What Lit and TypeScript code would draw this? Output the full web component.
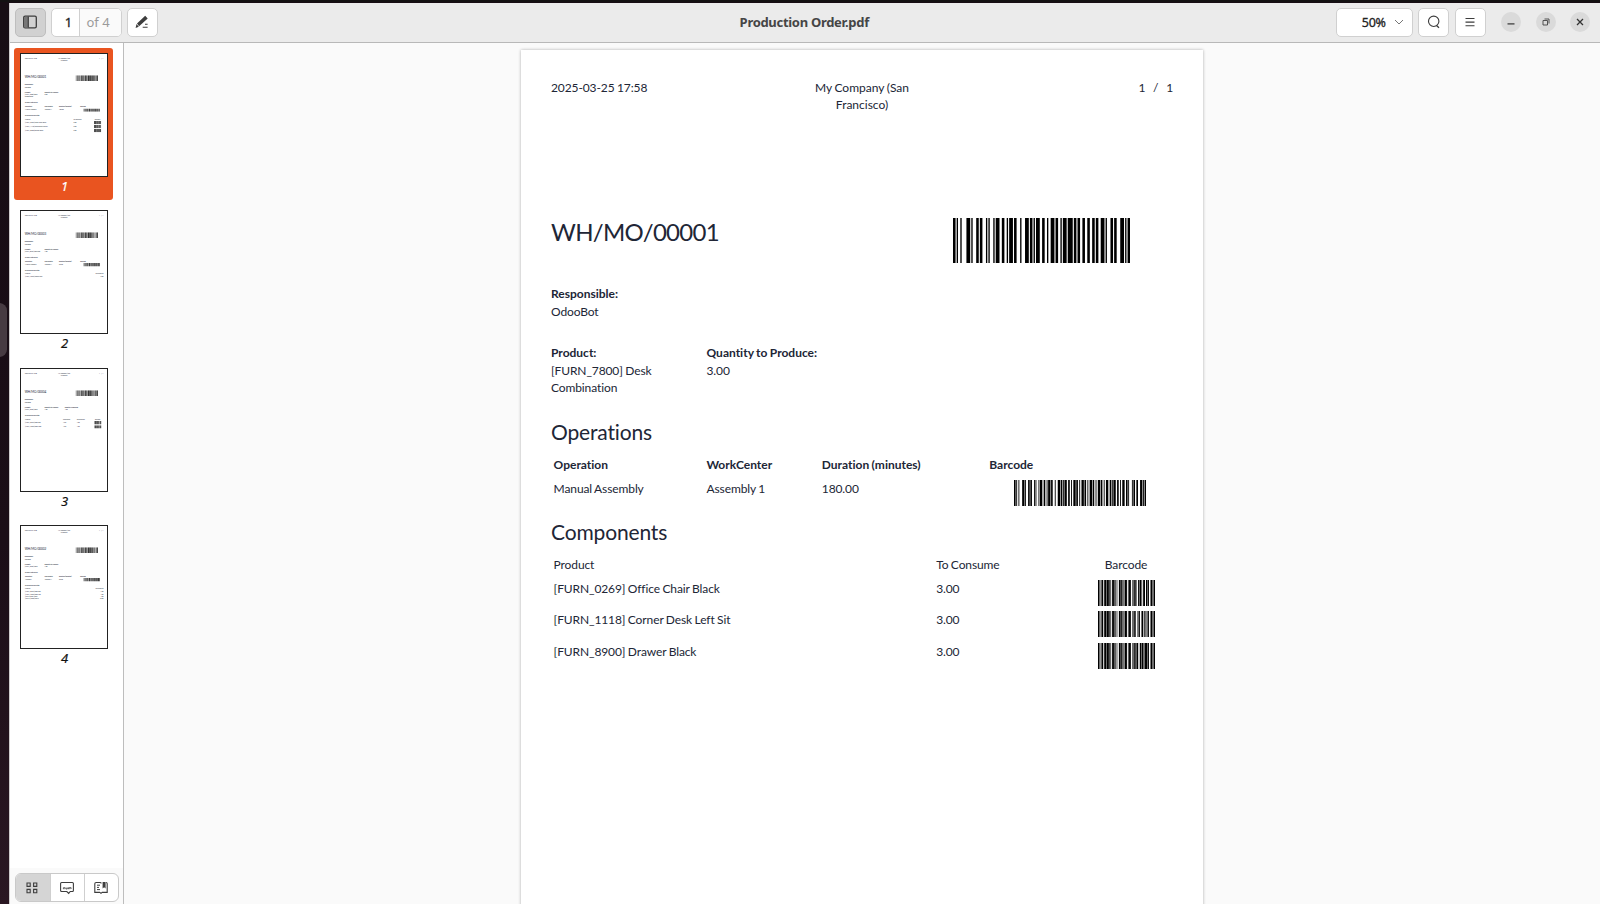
import { LitElement, html, svg, css, nothing } from "lit";
import { customElement, property } from "lit/decorators.js";

const PATTERNS = (
  "212222 222122 222221 121223 121322 131222 122213 122312 132212 221213 " +
  "221312 231212 112232 122132 122231 113222 123122 123221 223211 221132 " +
  "221231 213212 223112 312131 311222 321122 321221 312212 322112 322211 " +
  "212123 212321 232121 111323 131123 131321 112313 132113 132311 211313 " +
  "231113 231311 112133 112331 132131 113123 113321 133121 313121 211331 " +
  "231131 213113 213311 213131 311123 311321 331121 312113 312311 332111 " +
  "314111 221411 431111 111224 111422 121124 121421 141122 141221 112214 " +
  "112412 122114 122411 142112 142211 241211 221114 413111 241112 134111 " +
  "111242 121142 121241 114212 124112 124211 411212 421112 421211 212141 " +
  "214121 412121 111143 111341 131141 114113 114311 411113 411311 113141 " +
  "114131 311141 411131 211412 211214 211232 2331112"
).split(" ");

/** Code 128: set B for the text, set C for an even run of trailing digits. */
function code128(value: string): string {
  const tail = /\d*$/.exec(value)![0];
  const even = tail.length - (tail.length % 2);
  const packed = even >= 4 ? even : 0;
  const head = value.slice(0, value.length - packed);
  const codes: number[] = [head ? 104 : 105];
  for (const c of head) codes.push(c.charCodeAt(0) - 32);
  if (packed && head) codes.push(99);
  for (let i = head.length; i < value.length; i += 2) codes.push(Number(value.slice(i, i + 2)));
  const sum = codes.reduce((a, c, i) => a + c * Math.max(i, 1), 0);
  codes.push(sum % 103, 106);
  return codes.map((c) => PATTERNS[c]).join("");
}

@customElement("bar-code")
class BarCode extends LitElement {
  @property() value = "";
  /** Extra ink on each bar, in modules. */
  @property({ type: Number }) gain = 0;
  static styles = css`
    :host { display: block; }
    .bars { display: block; width: 100%; height: 100%; }
  `;
  render() {
    let x = 0;
    let d = "";
    [...code128(this.value)].forEach((w, i) => {
      const n = Number(w);
      const ink = n + this.gain;
      if (i % 2 === 0) d += `M${x} 0h${ink}v10h-${ink}z`;
      x += n;
    });
    return html`<svg class="bars" viewBox="0 0 ${x} 10" preserveAspectRatio="none">
      ${svg`<path d=${d} fill="#000"></path>`}
    </svg>`;
  }
}

interface Info { label: string; lines: string[]; }
interface Order {
  name: string;
  info: Info[];
  operation?: { cells: string[]; code: string };
  columns: string;
  heads: string[];
  rows: { cells: string[]; code?: string }[];
}

const COMPONENTS = "382.6px 166px 1fr";

const ORDERS: Order[] = [
  {
    name: "WH/MO/00001",
    info: [
      { label: "Product:", lines: ["[FURN_7800] Desk", "Combination"] },
      { label: "Quantity to Produce:", lines: ["3.00"] },
    ],
    operation: { cells: ["Manual Assembly", "Assembly 1", "180.00"], code: "WH/MO/00001/1" },
    columns: COMPONENTS,
    heads: ["Product", "To Consume", "Barcode"],
    rows: [
      { cells: ["[FURN_0269] Office Chair Black", "3.00"], code: "601647855632" },
      { cells: ["[FURN_1118] Corner Desk Left Sit", "3.00"], code: "601647855634" },
      { cells: ["[FURN_8900] Drawer Black", "3.00"], code: "601647855646" },
    ],
  },
  {
    name: "WH/MO/00003",
    info: [
      { label: "Product:", lines: ["[FURN_8522] Table Top"] },
      { label: "Quantity to Produce:", lines: ["1.00"] },
    ],
    operation: { cells: ["Manual Assembly", "Assembly 1", "60.00"], code: "WH/MO/00003/3" },
    columns: "1fr auto",
    heads: ["Product", "To Consume"],
    rows: [{ cells: ["[FURN_7023] Wood Panel", "2.00"] }],
  },
  {
    name: "WH/MO/00004",
    info: [
      { label: "Product:", lines: ["[FURN_9666] Table"] },
      { label: "Quantity to Produce:", lines: ["1.00"] },
      { label: "Quantity Producing:", lines: ["1.00"] },
    ],
    columns: "300px 108px 142px 1fr",
    heads: ["Product", "Consumed", "To Consume", "Barcode"],
    rows: [
      { cells: ["[FURN_8522] Table Top", "1.00", "1.00"], code: "601647855637" },
      { cells: ["[FURN_2333] Table Legs", "4.00", "4.00"], code: "601647855638" },
    ],
  },
  {
    name: "WH/MO/00002",
    info: [
      { label: "Product:", lines: ["[FURN_9666] Table"] },
      { label: "Quantity to Produce:", lines: ["1.00"] },
    ],
    operation: { cells: ["Assembly", "Assembly 1", "60.00"], code: "WH/MO/00002/2" },
    columns: "1fr auto",
    heads: ["Product", "To Consume"],
    rows: [
      { cells: ["[FURN_8522] Table Top", "1.00"] },
      { cells: ["[FURN_2333] Table Leg", "4.00"] },
      { cells: ["[CONS_8901] Bolt", "4.00"] },
      { cells: ["[CONS_2568] Screw", "10.00"] },
    ],
  },
];

@customElement("order-page")
class OrderPage extends LitElement {
  @property({ attribute: false }) order!: Order;
  static styles = css`
    :host {
      display: block; box-sizing: border-box; width: 682px; height: 965px; padding: 28px 30px 0;
      background: #fff; color: #212636; font: 12px/17.5px Lato, sans-serif; white-space: nowrap;
      letter-spacing: -0.11px; word-spacing: -0.5px; font-variant-ligatures: none;
    }
    .head { display: grid; grid-template-columns: 1fr 118px 1fr; height: 138px; line-height: 17px; padding-top: 1px; box-sizing: border-box; }
    .mid { text-align: center; letter-spacing: 0; }
    .num { text-align: right; word-spacing: 4.8px; }
    .title { display: flex; justify-content: space-between; height: 69.4px; }
    .h1 { font-size: 24px; line-height: 31.6px; letter-spacing: -0.7px; }
    .big { width: 177px; height: 45px; margin: 2px 43px 0 0; }
    .b { font-weight: 700; letter-spacing: 0; }
    .info { display: grid; grid-template-columns: 155.5px 160px 1fr; margin-top: 24px; }
    .h2 { font-size: 21px; line-height: 26px; margin-top: 22px; letter-spacing: -0.15px; }
    .h2.next { margin-top: 13px; }
    .table { padding-left: 2.6px; margin-top: 11px; }
    .row { display: grid; height: 31.4px; }
    .row.labels { height: 24px; }
    .row.plain { height: 18px; }
    .row.plain div + div { text-align: right; }
    .ops { grid-template-columns: 152.9px 115.3px 167.5px 1fr; }
    .ops.row { height: 26px; }
    .ops.labels { height: 24px; }
    .opcode { width: 132px; height: 26px; margin: -0.4px 0 0 25px; }
    .item { width: 57px; height: 26px; margin: 0.1px 0 0 -4px; }
    .off { padding-left: 2.6px; }
  `;
  render() {
    const o = this.order;
    return html`
      <div class="head">
        <div>2025-03-25 17:58</div>
        <div class="mid">My Company (San<br />Francisco)</div>
        <div class="num">1 / 1</div>
      </div>
      <div class="title">
        <div class="h1">${o.name}</div>
        <bar-code class="big" .value=${o.name} .gain=${0.1}></bar-code>
      </div>
      <div class="b">Responsible:</div>
      <div>OdooBot</div>
      <div class="info">
        ${o.info.map((i) => html`<div><div class="b">${i.label}</div>${i.lines.map((l) => html`<div>${l}</div>`)}</div>`)}
      </div>
      ${o.operation
        ? html`<div class="h2">Operations</div>
            <div class="table">
              <div class="row ops labels b">
                <div>Operation</div><div>WorkCenter</div><div>Duration (minutes)</div><div>Barcode</div>
              </div>
              <div class="row ops">
                ${o.operation.cells.map((c) => html`<div>${c}</div>`)}
                <bar-code class="opcode" .value=${o.operation.code} .gain=${0.2}></bar-code>
              </div>
            </div>`
        : nothing}
      <div class="h2 ${o.operation ? "next" : ""}">Components</div>
      <div class="table">
        <div class="row labels" style="grid-template-columns:${o.columns}">
          ${o.heads.map((h) => html`<div class=${h === "Barcode" ? "off" : ""}>${h}</div>`)}
        </div>
        ${o.rows.map((r) => html`<div class="row ${r.code ? "" : "plain"}" style="grid-template-columns:${o.columns}">
          ${r.cells.map((c) => html`<div>${c}</div>`)}
          ${r.code ? html`<bar-code class="item" .value=${r.code} .gain=${0.25}></bar-code>` : nothing}
        </div>`)}
      </div>`;
  }
}

const icon = (body: unknown) => html`<svg width="16" height="16" viewBox="0 0 16 16" fill="none" stroke="#3d3d3d">${body}</svg>`;
const ICONS = {
  panel: icon(svg`<rect x="1.7" y="2.2" width="12.6" height="11.6" rx="1.4" stroke-width="1.3"/><path d="M2 3h4v10.5H2z" fill="#777" stroke="none"/><path d="M6.3 2.5v11" stroke-width="1.2"/>`),
  pen: icon(svg`<path d="M1.6 13.9l.9-3.8 2.3 2.6zM3 9.4L11.2 1.8l2.5 2.6-8.6 7.8z" fill="#3d3d3d" stroke="none"/><path d="M11 10.2h2.6M8.7 13.2h4.9" stroke-width="1.1"/>`),
  search: icon(svg`<circle cx="7.7" cy="7.3" r="5.2" stroke-width="1.1"/><path d="M10.5 11.5l2.5 2.2" stroke-width="1.3"/>`),
  menu: icon(svg`<path d="M3.5 4.5h9M3.5 8.1h9M3.5 11.7h9" stroke-width="1.1"/>`),
  grid: icon(svg`<path d="M3 3h3.2v3.4H3zM9.6 3h3.2v3.4H9.6zM3 9.4h3.2v3.4H3zM9.6 9.4h3.2v3.4H9.6z" stroke-width="1.1"/>`),
  note: icon(svg`<path d="M2.6 2.5h10.8q1 0 1 1v7q0 1-1 1h-2.2l-1.5 2-1.9-2H2.6q-1 0-1-1v-7q0-1 1-1z" stroke-width="1.1"/><path d="M4.4 9.2V7.7h1.5v1.5M7 7.5V9h1.3V7.5M9.5 9.2V7.7h1.3v1.5M10.8 7.7h1.3v1.2" stroke-width=".8"/>`),
  book: icon(svg`<path d="M8.5 3.2l-1.2-.7H3.2q-1.4 0-1.4 1.3v8.6h5l1.2 1 1.2-1h5V3.8q0-1.3-1.2-1.3" stroke-width="1.1"/><path d="M9.6 1.9h3v6.6l-1.5-1.3-1.5 1.3z" fill="#3d3d3d" stroke="none"/><path d="M4 5.2h3M4 7.4h2M4 9.6h3" stroke-width="1"/>`),
};

@customElement("app-root")
class AppRoot extends LitElement {
  static styles = css`
    :host {
      display: flex; box-sizing: border-box; width: 1600px; height: 904px; overflow: hidden;
      padding: 3px 0 0 9px; position: relative; color: #3d3d3d;
      background: linear-gradient(#131112 0 2.4px, #fff0 2.4px), linear-gradient(#170d14, #1b0e17 60%, #2a1722);
      font: 14px "Noto Sans", "Open Sans", sans-serif;
    }
    svg { display: block; flex: none; }
    .handle { position: absolute; left: -8px; top: 303px; width: 15px; height: 54px; border-radius: 8px; background: #473b42; }
    .window { flex: 1; display: flex; flex-direction: column; background: #fafafa; border-left: 1px solid #cfcccd; min-width: 0; }
    .bar { display: grid; grid-template-columns: 1fr auto 1fr; align-items: center; height: 40px; box-sizing: border-box; background: #ebebeb; border-bottom: 1px solid #b8b8b8; padding: 0 10px 1px 4.5px; }
    .side { display: flex; align-items: center; }
    .right { justify-content: flex-end; }
    .title { font-weight: 700; font-size: 13px; letter-spacing: -0.3px; color: #454545; padding-left: 4px; }
    .btn { box-sizing: border-box; display: flex; align-items: center; justify-content: center; width: 31px; height: 29px; border: 1px solid #d0d0d0; border-radius: 5px; background: #fff; }
    .btn.on { background: #d1d1d1; border-color: #bebebe; }
    .pages { width: 71px; margin: 0 5px; justify-content: stretch; overflow: hidden; line-height: 27px; }
    .cur { width: 28px; box-sizing: border-box; padding-left: 7px; text-align: center; color: #222; font-size: 13px; border-right: 1px solid #d0d0d0; -webkit-text-stroke: .3px #222; }
    .of { flex: 1; padding-left: 7px; color: #9a9a9a; background: #fafafa; font-size: 13px; }
    .zoom { width: 77px; margin-right: 5.5px; padding-left: 17px; gap: 8px; font-size: 12.5px; color: #222; letter-spacing: -0.3px; -webkit-text-stroke: .3px #222; }
    .menu { margin: 0 15.5px 0 5.5px; }
    .dot { width: 20px; height: 20px; border-radius: 50%; background: #dadada; margin-left: 14.4px; display: flex; align-items: center; justify-content: center; }
    .dot.first { margin-left: 0; }
    .body { flex: 1; display: flex; min-height: 0; }
    .nav { width: 113px; display: flex; flex-direction: column; background: #fff; border-right: 1px solid #bdbdbd; }
    .thumbs { flex: 1; padding: 5px 0 0 4px; display: flex; flex-direction: column; min-height: 0; overflow: hidden; }
    .thumb { width: 99px; height: 152px; margin-bottom: 5.3px; border-radius: 3px; box-sizing: border-box; padding: 5px 6px 0; color: #111; font-size: 13px; line-height: 18px; flex: none; }
    .no { text-align: center; font-style: italic; padding-left: 2px; -webkit-text-stroke: .2px; }
    .thumb.sel { background: #e95420; color: #fff; }
    .frame { width: 88px; height: 124px; box-sizing: border-box; border: 1px solid #222; overflow: hidden; background: #fff; }
    .mini { transform: scale(.1265); transform-origin: 0 0; margin-left: -0.3px; }
    .foot { height: 36px; flex: none; background: #fafafa; padding: 5px 0 0 4.5px; box-sizing: border-box; }
    .tabs { width: 104px; height: 29px; box-sizing: border-box; display: grid; grid-template-columns: repeat(3, 1fr); border: 1px solid #c9c9c9; border-radius: 6px; background: #fff; overflow: hidden; }
    .tab { display: flex; align-items: center; justify-content: center; border-left: 1px solid #cfcfcf; padding-right: 1px; }
    .tab.on { background: #d5d5d5; border-left: 0; padding-right: 1.5px; }
    .view { flex: 1; overflow: hidden; padding: 7px 0 0 397px; }
    .sheet { box-shadow: 0 0 3px rgba(0, 0, 0, .3); }
  `;
  render() {
    return html`
      <div class="handle"></div>
      <div class="window">
        <div class="bar">
          <div class="side">
            <div class="btn on">${ICONS.panel}</div>
            <div class="btn pages"><span class="cur">1</span><span class="of">of 4</span></div>
            <div class="btn">${ICONS.pen}</div>
          </div>
          <div class="title">Production Order.pdf</div>
          <div class="side right">
            <div class="btn zoom">50%<svg width="10" height="6" viewBox="0 0 10 6" fill="none" stroke="#777"><path d="M1 1l4 4 4-4"/></svg></div>
            <div class="btn">${ICONS.search}</div>
            <div class="btn menu">${ICONS.menu}</div>
            <div class="dot first"><svg width="8" height="8" viewBox="0 0 8 8"><path d="M.5 5.9h7" stroke="#333" stroke-width="1.2"/></svg></div>
            <div class="dot"><svg width="8" height="8" viewBox="0 0 8 8" fill="none" stroke="#444"><path d="M1 2.5h4.5V7H1zM2.5 1H7v4.5" stroke-width=".9"/></svg></div>
            <div class="dot"><svg width="8" height="8" viewBox="0 0 8 8"><path d="M1 1l6 6M7 1L1 7" stroke="#333" stroke-width="1.3"/></svg></div>
          </div>
        </div>
        <div class="body">
          <div class="nav">
            <div class="thumbs">
              ${ORDERS.map((o, i) => html`<div class="thumb ${i ? "" : "sel"}">
                <div class="frame"><order-page class="mini" .order=${o}></order-page></div>
                <div class="no">${i + 1}</div>
              </div>`)}
            </div>
            <div class="foot">
              <div class="tabs">
                <div class="tab on">${ICONS.grid}</div>
                <div class="tab">${ICONS.note}</div>
                <div class="tab">${ICONS.book}</div>
              </div>
            </div>
          </div>
          <div class="view"><order-page class="sheet" .order=${ORDERS[0]}></order-page></div>
        </div>
      </div>`;
  }
}
